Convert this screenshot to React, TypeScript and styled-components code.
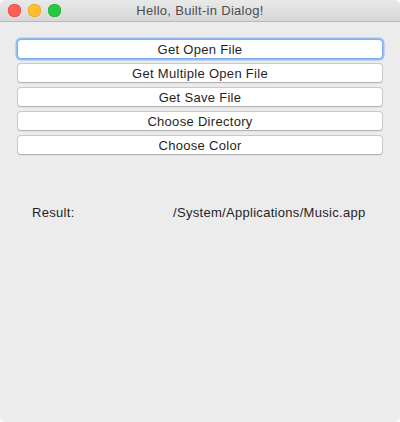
import styled, { createGlobalStyle } from "styled-components";

const Global = createGlobalStyle`
    html, body { margin: 0; padding: 0; background: #fff; }
    body { font-family: "Liberation Sans", Arial, sans-serif; letter-spacing: 0.3px; }
    * { box-sizing: border-box; }
`

const Window = styled.div`
    width: 400px; height: 422px; background: #ececec;
    border-radius: 5px; overflow: hidden;
    display: flex; flex-direction: column;
`
const TitleBar = styled.div`
    height: 22px; flex-shrink: 0; position: relative;
    background: linear-gradient(#e9e9e9, #d7d7d7);
    border-bottom: 1px solid #b9b9b9;
    display: flex; align-items: center; justify-content: center;
    font-size: 13px; color: #4d4d4d;
`
const Lights = styled.div`
    position: absolute; left: 8px; top: 4px;
    display: flex; gap: 7.5px;
`
const Light = styled.span<{ color: string; edge: string }>`
    width: 12.5px; height: 12.5px; border-radius: 50%;
    background: ${(p) => p.color};
    box-shadow: inset 0 0 0 0.5px ${(p) => p.edge};
`
const Body = styled.div`
    padding: 17px 17px 0;
    display: flex; flex-direction: column;
`
const ButtonList = styled.div`
    display: flex; flex-direction: column; gap: 4px;
`
const Button = styled.button<{ focused?: boolean }>`
    height: 20px; width: 100%; padding: 0;
    background: #fff; border-radius: 4px;
    border: 1px solid ${(p) => (p.focused ? "#7eaef0" : "#c8c8c8")};
    border-bottom-color: ${(p) => (p.focused ? "#7eaef0" : "#b4b4b4")};
    box-shadow: ${(p) => (p.focused ? "0 0 0 1.5px #94bdf5" : "0 0.5px 0.5px rgba(0,0,0,0.08)")};
    font-family: "Liberation Sans", Arial, sans-serif; font-size: 13px; color: #1f1f1f;
    letter-spacing: 0.3px;
    display: flex; align-items: center; justify-content: center;
`
const ResultRow = styled.div`
    margin-top: 50px; padding-left: 15px;
    display: grid; grid-template-columns: 141px auto;
    font-size: 13px; color: #1f1f1f; line-height: 15px;
`

const buttons = ["Get Open File", "Get Multiple Open File", "Get Save File", "Choose Directory", "Choose Color"];

function App() {
    return (
        <>
            <Global />
            <Window>
                <TitleBar>
                    <Lights>
                        <Light color="#fe5f57" edge="#e0443e" />
                        <Light color="#febc2e" edge="#dea123" />
                        <Light color="#28c840" edge="#1aab29" />
                    </Lights>
                    Hello, Built-in Dialog!
                </TitleBar>
                <Body>
                    <ButtonList>
                        {buttons.map((b, k) => (
                            <Button key={k} focused={k == 0}>{b}</Button>
                        ))}
                    </ButtonList>
                    <ResultRow>
                        <span>Result:</span>
                        <span>/System/Applications/Music.app</span>
                    </ResultRow>
                </Body>
            </Window>
        </>
    )
}
export default App;
